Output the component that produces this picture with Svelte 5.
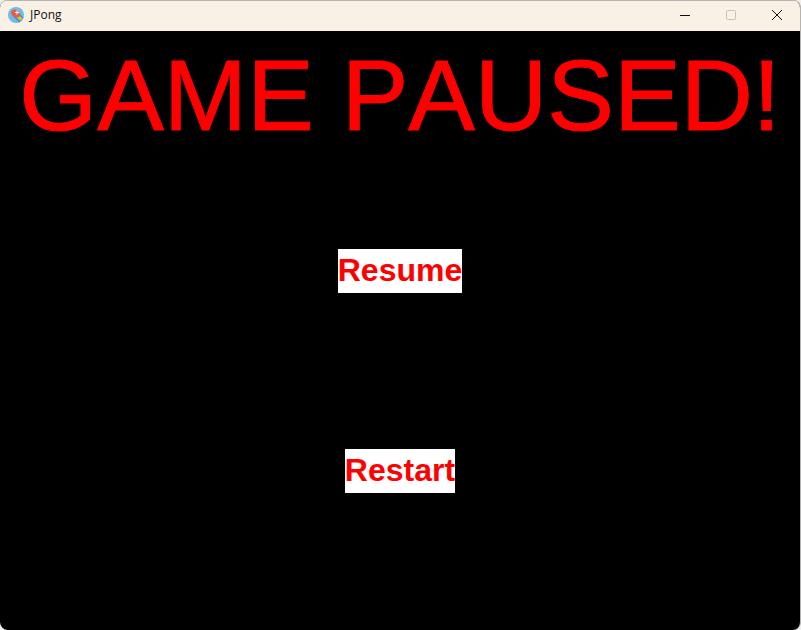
<script>
  const actions = ['Resume', 'Restart'];
</script>

<div class="window">
  <header class="titlebar">
    <svg class="logo" viewBox="0 0 16 16" aria-hidden="true">
      <circle cx="8" cy="8" r="8" fill="#6dbcec" />
      <path d="M10 5L15.500 10.500A8 8 0 0 1 11 15.400L5 9.500z" fill="#2f9be6" />
      <path d="M9.500 9.500l4 3" stroke="#f9b81c" stroke-width="3" />
      <ellipse cx="7.500" cy="6.500" rx="4.700" ry="3.700" fill="#ee5c3c" transform="rotate(35 7.500 6.500)" />
      <path d="M9 3.500v4M7 5.500h4" stroke="#fff" />
    </svg>
    <span class="caption">JPong</span>
    <div class="controls">
      <button aria-label="Minimize"><svg viewBox="0 0 10 10"><path d="M0 5.500h10" /></svg></button>
      <button aria-label="Maximize" disabled><svg viewBox="0 0 10 10"><rect x=".5" y=".5" width="9" height="9" rx="1" /></svg></button>
      <button aria-label="Close"><svg viewBox="0 0 10 10"><path d="M0 0l10 10M10 0L0 10" /></svg></button>
    </div>
  </header>
  <main>
    <h1>GAME PAUSED!</h1>
    <nav>
      {#each actions as action}
        <button class="action">{action}</button>
      {/each}
    </nav>
  </main>
</div>

<style>
  :global(body) { background: #f0f0f0; }
  .window { min-height: 100vh; display: flex; flex-direction: column; box-sizing: border-box; border-right: 1px solid #b4b4b4; border-radius: 8px; overflow: hidden; background: #000; font-family: "Liberation Sans", Arial, sans-serif; font-kerning: none; }
  .titlebar { box-sizing: border-box; height: 31px; display: flex; align-items: center; padding: 0 0 2px 8px; border-top: 1px solid #b4b4b4; background: #f9f1e5; }
  .logo { width: 16px; height: 16px; }
  .caption { margin-left: 6px; font: 12px/16px "Open Sans", sans-serif; color: #111; }
  .controls { margin-left: auto; display: flex; height: 100%; }
  .controls button { width: 46px; padding: 0; border: 0; background: none; display: grid; place-items: center; color: #111; }
  .controls button:disabled { color: #c8c2b8; }
  .controls svg { width: 10px; height: 10px; fill: none; stroke: currentColor; overflow: visible; }
  main { flex: 1; display: flex; flex-direction: column; align-items: center; color: #f00; }
  h1 { margin: 7px 0 0; font-size: 100px; line-height: 115px; font-weight: 400; white-space: nowrap; -webkit-text-stroke: 1px #f00; }
  nav { display: flex; flex-direction: column; align-items: center; gap: 156px; margin-top: 96px; }
  .action { padding: 0 0 2px; border: 0; background: #fff; color: #f00; font: bold 32px/42px "Liberation Sans", Arial, sans-serif; }
</style>
